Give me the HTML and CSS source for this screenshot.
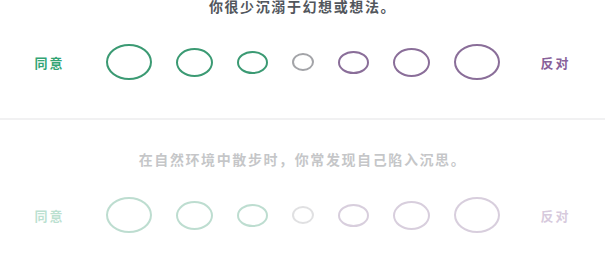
FILE: index.html
```html
<!DOCTYPE html>
<html lang="zh">
<head>
<meta charset="utf-8">
<link rel="stylesheet" href="styles.css">
</head>
<body>
<div class="page">
  <section class="question">
    <h2 class="statement">你很少沉溺于幻想或想法。</h2>
    <div class="scale">
      <span class="label agree">同意</span>
      <div class="options">
        <span class="opt agree-c size-xl"></span>
        <span class="opt agree-c size-l"></span>
        <span class="opt agree-c size-m"></span>
        <span class="opt neutral size-s"></span>
        <span class="opt disagree-c size-m"></span>
        <span class="opt disagree-c size-l"></span>
        <span class="opt disagree-c size-xl"></span>
      </div>
      <span class="label disagree">反对</span>
    </div>
  </section>
  <hr class="divider">
  <section class="question inactive">
    <h2 class="statement">在自然环境中散步时，你常发现自己陷入沉思。</h2>
    <div class="scale">
      <span class="label agree">同意</span>
      <div class="options">
        <span class="opt agree-c size-xl"></span>
        <span class="opt agree-c size-l"></span>
        <span class="opt agree-c size-m"></span>
        <span class="opt neutral size-s"></span>
        <span class="opt disagree-c size-m"></span>
        <span class="opt disagree-c size-l"></span>
        <span class="opt disagree-c size-xl"></span>
      </div>
      <span class="label disagree">反对</span>
    </div>
  </section>
</div>
</body>
</html>
```
FILE: styles.css
```css
html, body {
  margin: 0;
  padding: 0;
  background: #ffffff;
}
body {
  font-family: "Noto Sans CJK SC", "Noto Sans", sans-serif;
  overflow: hidden;
}
.page {
  width: 605px;
  height: 278px;
}
.question {
  display: flex;
  flex-direction: column;
  align-items: center;
}
.question:first-child {
  margin-top: -4px;
}
.statement {
  margin: 0;
  font-size: 14px;
  line-height: 20px;
  font-weight: 700;
  letter-spacing: 1.6px;
  color: #52565c;
  text-align: center;
}
.scale {
  margin-top: 27px;
  height: 38px;
  display: flex;
  align-items: center;
  justify-content: center;
  gap: 28px;
  width: 100%;
}
.label {
  width: 56px;
  text-align: center;
  font-size: 13px;
  font-weight: 700;
  letter-spacing: 2px;
}
.label.agree { color: #33a474; }
.label.disagree { color: #88619a; }
.options {
  display: flex;
  align-items: center;
  gap: 24px;
}
.opt {
  display: block;
  box-sizing: border-box;
  border-radius: 50%;
  border: 2px solid;
}
.agree-c { border-color: #3b9a73; }
.disagree-c { border-color: #8a6e99; }
.neutral { border-color: #a3a4a8; }
.size-xl { width: 46px; height: 36px; }
.size-l { width: 37px; height: 29px; }
.size-m { width: 31px; height: 23px; }
.size-s { width: 22px; height: 18px; }
.divider {
  margin: 37px 0 0;
  border: 0;
  height: 2px;
  background: #f1f1f2;
}
.inactive {
  margin-top: 29px;
  opacity: 0.33;
}
```
